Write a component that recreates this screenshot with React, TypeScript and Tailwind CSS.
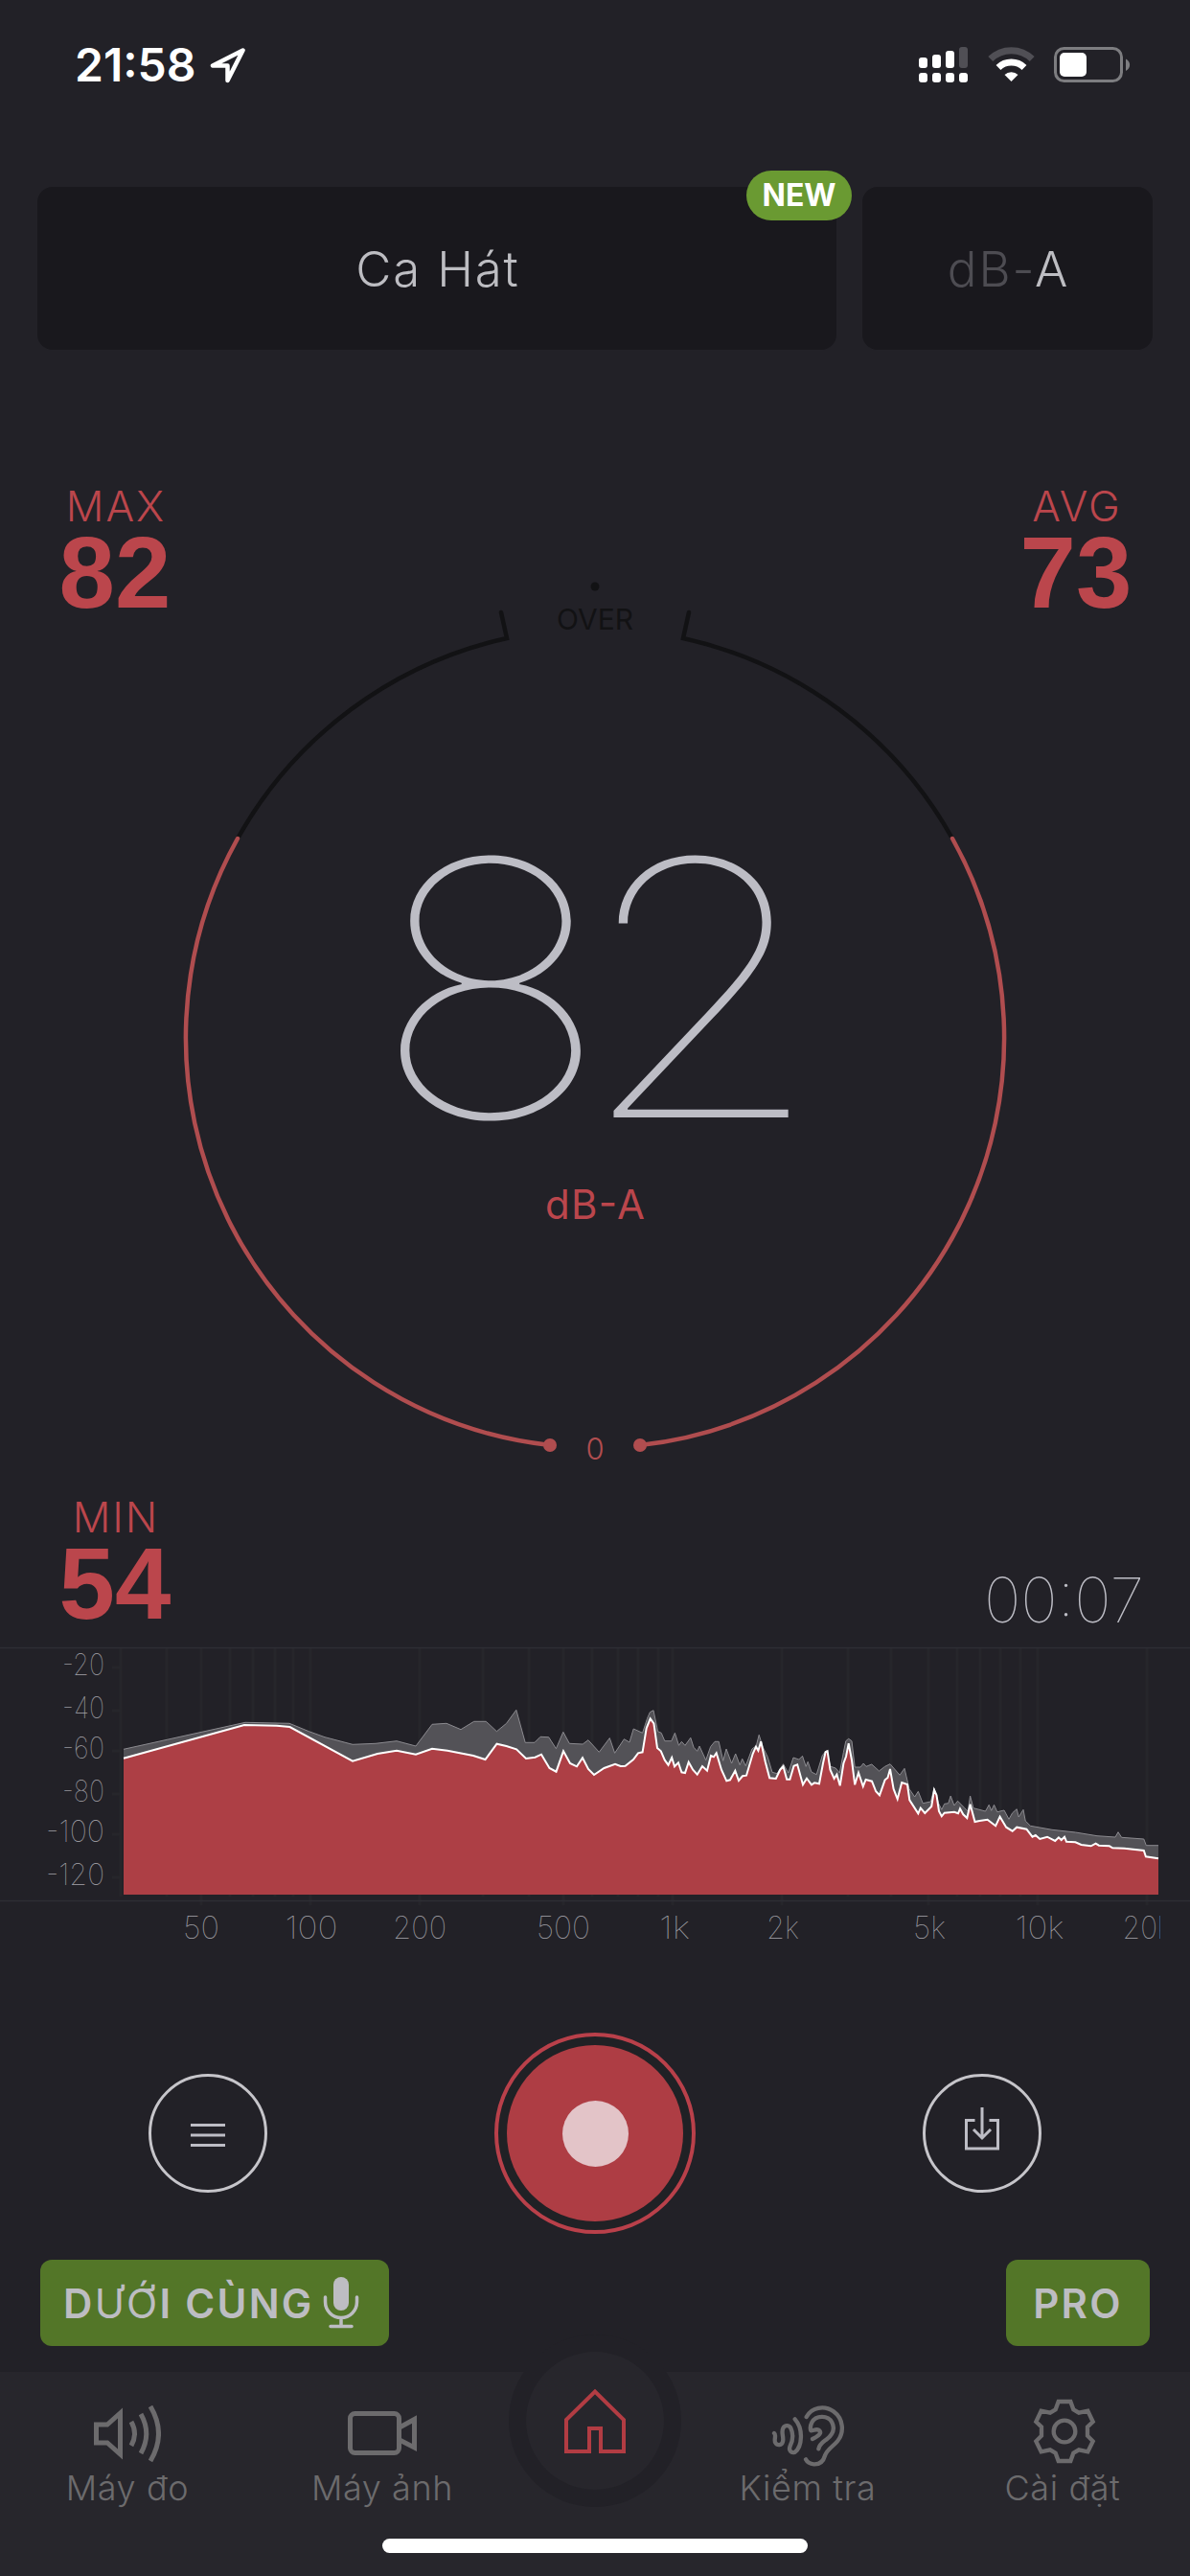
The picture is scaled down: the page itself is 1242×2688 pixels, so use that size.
import type { ReactNode } from "react";

type Point = [number, number];

// Live spectrum trace, [x, y] in chart pixels
const LEVEL: Point[] = [
  [129, 134.7], [255, 100], [289, 100.7], [302.5, 102], [368, 137.7], [394, 130], [414, 126.7], [434, 130.7],
  [451, 124.7], [467, 126.7], [494, 132], [506.5, 136], [518.5, 119.7], [528.5, 122], [539, 125.3], [549, 135],
  [558.5, 133.7], [565, 130.7], [573.5, 145], [580.5, 148.7], [588, 127.3], [595, 140], [602, 143.3], [608, 134.3],
  [614, 146], [620, 152], [630.5, 145], [642, 140.7], [647.7, 143], [652.6, 142.7], [661, 136], [666, 129.3],
  [670.6, 128.3], [674.7, 103.3], [678.7, 93.3], [682.4, 98.3], [686, 124], [689.8, 127.3], [693.8, 136.7],
  [697.5, 141.7], [701.2, 134], [704, 143.3], [708, 139.3], [711.4, 149.3], [715, 150], [718.7, 138.7],
  [723.2, 146.7], [727.7, 151.7], [733, 143], [738, 147.7], [742, 132], [744.9, 133.3], [747.7, 129.3],
  [753, 146.7], [758.3, 158.3], [762, 157.3], [767.3, 147.7], [771, 158], [775, 153.3], [779, 152.7],
  [785.7, 130], [789, 122.7], [791.4, 126.7], [794.2, 117.3], [798.7, 138.3], [803.2, 155.3], [809.8, 156],
  [814.2, 146.7], [817.5, 143.3], [821.2, 156.7], [824.4, 156.7], [828.5, 142.7], [832.2, 141.3], [838, 162.3],
  [842, 155.7], [847, 162.3], [850, 160.3], [855, 161.3], [859, 140], [861.6, 128.3], [863.6, 127.3],
  [866.5, 146.7], [870.6, 156], [873.4, 151.7], [876.7, 163.3], [880.4, 140], [883, 133], [885.7, 119.3],
  [889, 136.7], [892.2, 162.3], [896, 149.7], [900.8, 164], [903.6, 157], [910, 158.7], [914.2, 169.3],
  [918, 173.3], [923.6, 157.3], [926.5, 155], [929, 146], [932.6, 166.7], [936.7, 177.3], [941.2, 160],
  [947, 162], [949.3, 178.3], [958.3, 192.3], [960.8, 186.7], [965.3, 192], [972.2, 185], [975, 167.7],
  [977.5, 173.3], [980, 190], [982.8, 195.3], [985.7, 191.7], [996, 190.7], [1000, 192.3], [1002, 187.3],
  [1005.3, 193.3], [1009.3, 197], [1012.6, 182.7], [1017.5, 201], [1022.4, 200], [1030.6, 198.7], [1039.1, 205.3],
  [1043.6, 195.7], [1050.2, 206.7], [1056.7, 210.7], [1061.2, 206.7], [1071.4, 208.7], [1077.5, 216.7],
  [1080.8, 215], [1085.3, 219], [1093, 216.7], [1101.2, 221], [1104.9, 217.3], [1107.7, 220], [1111, 216.7],
  [1113, 221.7], [1122.4, 222.3], [1128.5, 225], [1138.7, 226.3], [1143.6, 223.7], [1146.9, 225.7],
  [1157.9, 226.3], [1161.2, 228.3], [1173.4, 228.7], [1193.8, 231], [1195.9, 237.3], [1209, 239.3],
];

// Peak hold trace
const PEAK: Point[] = [
  [129, 125.3], [256, 97.3], [302, 98.3], [322.4, 106.7], [339, 112.7], [368, 120.3], [392, 119.3], [414, 116.7],
  [434, 122], [451, 99.3], [466, 98.3], [481, 104.7], [494.7, 96.3], [507.3, 96.3], [518.4, 106.7], [528.6, 98.3],
  [538.8, 84.3], [548.2, 118.3], [558, 118.3], [564, 112.3], [572.7, 112.7], [580.4, 124.7], [587.8, 107.3],
  [594.3, 119.3], [608.2, 120], [613.9, 115.7], [625.3, 128.3], [636.3, 113.6], [641.6, 129.3], [651.4, 114.7],
  [657, 118], [661.2, 104], [670.6, 108.3], [675.5, 93.3], [678.3, 86.7], [682, 84.7], [686.5, 106.7],
  [690.2, 108.3], [693.8, 116.7], [700.8, 116.7], [704.4, 108.3], [708.5, 121.3], [711.4, 117.3], [715, 121.3],
  [720.8, 113.3], [724, 123.3], [727.7, 127.3], [730, 122], [736.7, 136.7], [741.6, 122.7], [746, 117.3],
  [750.2, 117.3], [754.7, 137.3], [758, 125], [763.6, 140], [767.7, 130], [772.2, 141.7], [774.7, 135.3],
  [778.3, 142.7], [784.9, 125], [789.3, 121.7], [792.2, 110.3], [796.3, 123.3], [801.2, 133.3], [806, 149.3],
  [811, 150.7], [817.5, 140.7], [822.8, 150], [828, 134], [833.8, 136], [837.5, 132.3], [841.2, 143.3],
  [843.2, 138.3], [846.9, 149], [852.2, 151.7], [858.3, 131.7], [862.4, 126.7], [866.9, 143.3], [872.2, 145],
  [876.3, 150], [880.4, 128.3], [882.8, 116.7], [885.7, 114.3], [889, 116.7], [892.2, 144], [898, 144],
  [901.2, 140], [904, 143.3], [909.8, 141], [917.5, 148], [923.6, 143.3], [929, 140.7], [939.1, 152.3],
  [944, 145.3], [949, 166.7], [954.7, 175], [958.3, 169.3], [963.2, 181.7], [971.4, 180], [975, 166],
  [979.6, 181.7], [982.8, 188.3], [985.7, 182.3], [989.8, 181.7], [992.2, 174], [995.9, 184], [999.6, 179.3],
  [1006.9, 186.7], [1010.2, 190], [1012.6, 174], [1015.9, 186.7], [1028.5, 190], [1032.2, 183.3], [1034.7, 189.3],
  [1037.5, 183.3], [1040.8, 190.7], [1048, 189], [1053, 198.3], [1056.7, 191.7], [1061.2, 187.7], [1063.2, 196],
  [1068, 188.3], [1070.2, 200], [1075.5, 205.3], [1098, 209.3], [1122.4, 212], [1145, 215.7], [1164, 217],
  [1167, 211.7], [1170.6, 217.3], [1193.8, 219], [1196.3, 225.7], [1209, 225.7],
];

const Y_LABELS = [
  { text: "-20", y: 40 },
  { text: "-40", y: 85 },
  { text: "-60", y: 127 },
  { text: "-80", y: 172 },
  { text: "-100", y: 214 },
  { text: "-120", y: 259 },
];

const X_LABELS = [
  { text: "50", x: 210, width: 38 },
  { text: "100", x: 325, width: 55 },
  { text: "200", x: 438, width: 56 },
  { text: "500", x: 588, width: 56 },
  { text: "1k", x: 704, width: 32 },
  { text: "2k", x: 817, width: 34 },
  { text: "5k", x: 970, width: 34 },
  { text: "10k", x: 1085, width: 51 },
  { text: "20k", x: 1197, width: 51 },
];

const MINOR_LINES = [126, 174, 240, 264, 287, 306, 504, 552, 618, 645, 666, 687, 885, 930, 999, 1023, 1044, 1065];
const MAJOR_LINES = [210, 324, 438, 588, 702, 816, 969, 1083, 1197];

const toPoints = (points: Point[]) => points.map((p) => p.join(",")).join(" ");

function StatusBar() {
  return (
    <div className="flex h-[195px] items-start justify-between pl-[78px] pr-[62px] pt-[44px]">
      <div className="flex items-center">
        <span className="text-[48px] leading-[48px] font-semibold text-white">21:58</span>
        <svg className="ml-[14px]" width="40" height="40" viewBox="0 0 40 40" fill="none">
          <path d="M35.500 4.500L4 20.500H19.500V36Z" stroke="#fff" strokeWidth="4.500" strokeLinejoin="round" />
        </svg>
      </div>
      <div className="flex items-start pt-[5px]">
        <svg width="51" height="37" viewBox="0 0 51 37" fill="#fff">
          <rect x="0" y="11" width="9" height="11" rx="3" />
          <rect x="14" y="8" width="9" height="14" rx="3" />
          <rect x="28" y="4" width="9" height="18" rx="3" />
          <rect x="42" y="0" width="9" height="22" rx="3" fill="#504f55" />
          <rect x="0" y="27" width="9" height="10" rx="3" />
          <rect x="14" y="27" width="9" height="10" rx="3" />
          <rect x="28" y="27" width="9" height="10" rx="3" />
          <rect x="42" y="27" width="9" height="10" rx="3" />
        </svg>
        <svg className="ml-[21px]" width="49" height="37" viewBox="0 0 49 37" fill="none">
          <path d="M2.800 12.500A31 31 0 0 1 46.200 12.500" stroke="#504f55" strokeWidth="7" />
          <path d="M11 21.500A19.500 19.500 0 0 1 38 21.500" stroke="#fff" strokeWidth="7" />
          <path d="M17.500 29A10 10 0 0 1 31.500 29L24.500 36Z" fill="#fff" />
        </svg>
        <svg className="ml-[20px]" width="80" height="37" viewBox="0 0 80 37" fill="none">
          <rect x="1.500" y="1.500" width="69" height="34" rx="9" stroke="#7d7d80" strokeWidth="3" />
          <rect x="6" y="6" width="28" height="25" rx="5" fill="#fff" />
          <path d="M75 12.500C80.500 15 80.500 22.500 75 25Z" fill="#7d7d80" />
        </svg>
      </div>
    </div>
  );
}

function Stat({ label, value }: { label: string; value: string }) {
  return (
    <div className="flex w-[120px] flex-col items-center text-[#bb464c]">
      <span className="pl-[2px] text-[44px] leading-[40px] font-light tracking-[2px]">{label}</span>
      <span className="font-['Liberation_Sans',sans-serif] text-[105px] leading-[100px] font-bold">{value}</span>
    </div>
  );
}

function Gauge() {
  return (
    <svg className="overflow-visible" width="856" height="1335" viewBox="193 365 856 1335" fill="none">
      <g stroke="#121214" strokeWidth="4.500" strokeLinecap="round">
        <path d="M248 875A427.500 427.500 0 0 1 529 666L523 639" />
        <path d="M994 875A427.500 427.500 0 0 0 713 666L719 639" />
      </g>
      <g stroke="#b04d4f" strokeWidth="4.500" strokeLinecap="round">
        <path d="M248 875A427.500 427.500 0 0 0 574 1508" />
        <path d="M994 875A427.500 427.500 0 0 1 668 1508" />
      </g>
      <circle cx="574" cy="1508" r="7" fill="#b04d4f" />
      <circle cx="668" cy="1508" r="7" fill="#b04d4f" />
      <circle cx="621" cy="612" r="4.500" fill="#121214" />
      <text x="581" y="657" textLength="80" fontSize="30" fill="#121214">OVER</text>
      <text x="621" y="1523" textAnchor="middle" fontSize="31" fontWeight="300" fill="#b04d4f">0</text>
      <text transform="translate(388 1166) scale(1.12 1)" x="0 191" y="0" fontSize="371" fontWeight="100" fill="#bdbdc5">
        82
      </text>
      <text x="569" y="1272" textLength="104" fontSize="42" fill="#bb464c">dB-A</text>
    </svg>
  );
}

function Spectrum() {
  return (
    <svg width="1242" height="340" viewBox="0 0 1242 340" fill="none">
      <g stroke="#26262b" strokeWidth="3">
        {MINOR_LINES.map((x) => (
          <path key={x} d={`M${x} 20V279`} />
        ))}
        {MAJOR_LINES.map((x) => (
          <path key={x} d={`M${x} 20V288`} />
        ))}
        {Y_LABELS.map(({ y }) => (
          <path key={y} d={`M117 ${y}H127`} />
        ))}
      </g>
      <path d="M0 19.500H1242M0 283.500H1242" stroke="#2e2e34" strokeWidth="1.500" />
      <polygon points={`129,277 ${toPoints(PEAK)} 1209,277`} fill="#535257" />
      <polyline points={toPoints(PEAK)} stroke="#8c8b90" strokeWidth="1" />
      <polygon points={`129,277 ${toPoints(LEVEL)} 1209,277`} fill="#ad3f45" />
      <polyline points={toPoints(LEVEL)} stroke="#fff" strokeWidth="2" />
      <g fontSize="31" fontWeight="100" fill="#a3a2a8">
        {Y_LABELS.map(({ text, y }) => (
          <text
            key={text}
            x={text.length > 3 ? 48 : 65}
            y={y + 8}
            textLength={text.length > 3 ? 61 : 44}
            lengthAdjust="spacingAndGlyphs"
          >
            {text}
          </text>
        ))}
      </g>
      <clipPath id="axis-clip">
        <rect x="0" y="284" width="1211" height="56" />
      </clipPath>
      <g clipPath="url(#axis-clip)" fontSize="33" fontWeight="100" fill="#a3a2a8">
        {X_LABELS.map(({ text, x, width }) => (
          <text key={text} x={x - width / 2} y="323" textLength={width} lengthAdjust="spacingAndGlyphs">
            {text}
          </text>
        ))}
      </g>
    </svg>
  );
}

function Controls() {
  return (
    <div className="mt-[81px] flex h-[210px] items-center justify-between px-[155px]">
      <button className="flex size-[124px] items-center justify-center rounded-full border-[3px] border-[#c6c5ca]">
        <svg className="mt-[3px]" width="36" height="26" viewBox="0 0 36 26">
          <path d="M0 2.500H36M0 13H36M0 23.500H36" stroke="#bdbdc5" strokeWidth="3.200" />
        </svg>
      </button>
      <button className="flex size-[210px] items-center justify-center rounded-full border-[4px] border-[#b9404a] bg-[#202125]">
        <span className="flex size-[184px] items-center justify-center rounded-full bg-[#ae3d44]">
          <span className="size-[69px] rounded-full bg-[#e3c4c8]" />
        </span>
      </button>
      <button className="flex size-[124px] items-center justify-center rounded-full border-[3px] border-[#c6c5ca]">
        <svg className="-mt-[10px]" width="36" height="45" viewBox="0 0 36 45" fill="none" stroke="#bdbdc5" strokeWidth="3">
          <path d="M10.500 13.500H1.500V43H34.500V13.500H25.500" />
          <path d="M18 0V32M9 23L18 32L27 23" />
        </svg>
      </button>
    </div>
  );
}

function Tab({ label, children }: { label: string; children: ReactNode }) {
  return (
    <button className="flex w-[266px] flex-col items-center">
      <span className="flex h-[100px] items-center justify-center">{children}</span>
      <span className="text-[36px] leading-[42px] font-light tracking-[0.6px] whitespace-nowrap text-[#6c6b6d]">{label}</span>
    </button>
  );
}

function TabBar() {
  return (
    <nav className="mt-[27px] h-[213px] bg-[#27262c]">
      <div className="flex h-[174px]">
        <Tab label="Máy đo">
          <svg className="mt-[30px]" width="70" height="60" viewBox="97 2510 70 60" fill="none" stroke="#6c6b6d" strokeWidth="5">
            <path d="M99.500 2530H111L124.500 2518V2561L111 2549H99.500Z" />
            <path d="M136 2527Q143 2539.500 136 2552M146 2519Q157.500 2539.500 146 2560M156 2511Q173 2539.500 156 2568" />
          </svg>
        </Tab>
        <Tab label="Máy ảnh">
          <svg className="mt-[28px]" width="74" height="48" viewBox="361 2515 74 48" fill="none" stroke="#6c6b6d" strokeWidth="5">
            <rect x="364.500" y="2518.500" width="51" height="41" rx="5" />
            <path d="M416 2533L431.500 2524.500V2554L416 2546" />
          </svg>
        </Tab>
        <div className="z-10 -mx-px -mt-[39px] flex size-[180px] shrink-0 items-center justify-center rounded-full bg-[#222127]">
          <div className="flex size-[144px] items-center justify-center rounded-full bg-[#27262c]">
            <svg width="66" height="70" viewBox="588 2492 66 70" fill="none" stroke="#b23c43" strokeWidth="4">
              <path d="M591 2526L621 2496.500L651 2526V2559H627V2535H615V2559H591Z" />
            </svg>
          </div>
        </div>
        <Tab label="Kiểm tra">
          <svg className="mt-[32px] ml-[2px]" width="84" height="70" viewBox="66 45 252 210" fill="none" stroke="#6c6b6d" strokeWidth="13" strokeLinecap="round" strokeLinejoin="round">
            <path d="M84 144C92 150 82 166 88 174C94 184 108 182 111 170C115 156 105 142 112 128C117 118 131 118 136 128C145 148 142 168 134 184C128 198 138 208 149 203C172 186 176 130 149 100" />
            <path d="M185 93C200 64 240 54 270 76C300 98 305 140 283 168C270 184 250 194 243 214C238 232 225 242 208 241C195 240 187 234 183 226" />
            <path d="M223 193C226 178 236 172 247 164C266 150 276 132 265 110C252 86 214 88 202 110C198 118 196 128 199 136C208 136 214 130 224 134C234 142 226 152 204 162" />
          </svg>
        </Tab>
        <Tab label="Cài đặt">
          <svg className="mt-[24px] ml-[3px]" width="68" height="70" viewBox="890 37 204 210" fill="none" stroke="#6c6b6d" strokeWidth="13">
            <path d="M973 49H1011L1020 74L1037 84L1065 78L1081 112L1064 128V156L1081 173L1065 206L1037 200L1020 210L1011 235H973L964 210L947 200L919 206L903 173L920 156V128L903 112L919 78L947 84L964 74Z" />
            <circle cx="992" cy="142" r="34" />
          </svg>
        </Tab>
      </div>
      <div className="mx-auto h-[15px] w-[444px] rounded-full bg-white" />
    </nav>
  );
}

export default function App() {
  return (
    <div className="flex h-[2688px] w-[1242px] flex-col overflow-hidden bg-[#222127] font-['Inter',sans-serif]">
      <StatusBar />

      {/* Mode and weighting */}
      <div className="flex h-[170px] gap-[27px] px-[39px]">
        <button className="relative flex w-[834px] items-center justify-center rounded-[16px] bg-[#19181d]">
          <span className="pl-[2px] text-[51px] leading-[49px] font-light tracking-[1.8px] text-[#bdbdc2]">Ca Hát</span>
          <span className="absolute -top-[17px] -right-[16px] flex h-[52px] w-[110px] items-center justify-center rounded-full bg-[#6a9a32] text-[32px] leading-[32px] font-bold text-white">
            NEW
          </span>
        </button>
        <button className="flex w-[303px] items-center justify-center rounded-[16px] bg-[#19181d]">
          <span className="pl-[2px] text-[51px] leading-[49px] font-light tracking-[2px] text-[#4d4c52]">
            dB-<span className="text-[#bdbdc2]">A</span>
          </span>
        </button>
      </div>

      {/* Meter */}
      <div className="grid h-[1335px] grid-cols-[193px_856px_193px]">
        <div className="-mb-[3px] flex flex-col justify-between pt-[143px] pl-[60px]">
          <Stat label="MAX" value="82" />
          <Stat label="MIN" value="54" />
        </div>
        <Gauge />
        <div className="-mb-px flex flex-col items-end justify-between pt-[143px]">
          <div className="mr-[59px]">
            <Stat label="AVG" value="73" />
          </div>
          <span className="mr-[48px] text-[65px] leading-[62px] font-thin whitespace-nowrap text-[#bdbdc5]">00:07</span>
        </div>
      </div>

      <Spectrum />
      <Controls />

      {/* Microphone position and upgrade */}
      <div className="mt-[27px] flex h-[90px] justify-between px-[42px]">
        <button className="flex w-[364px] items-center rounded-[12px] bg-[#537628] pl-[24px] text-left text-[#bdbdc2]">
          <span className="w-[260px] text-[42px] leading-[41px] font-semibold tracking-[2.3px] whitespace-nowrap">
            D<span className="font-normal">ƯỚ</span>I CÙNG
          </span>
          <svg className="ml-[11px]" width="38" height="54" viewBox="0 0 38 54" fill="none" stroke="#bdbdc2" strokeWidth="3.500" strokeLinecap="round">
            <rect x="11" y="0" width="16" height="35" rx="8" fill="#bdbdc2" stroke="none" />
            <path d="M2.500 21V26A16.500 16.500 0 0 0 35.500 26V21M19 43V51M8 51.500H30" />
          </svg>
        </button>
        <button className="flex w-[150px] items-center justify-center rounded-[12px] bg-[#537628] text-[42px] leading-[41px] font-semibold tracking-[2.3px] text-[#bdbdc2]">
          PRO
        </button>
      </div>

      <TabBar />
    </div>
  );
}
